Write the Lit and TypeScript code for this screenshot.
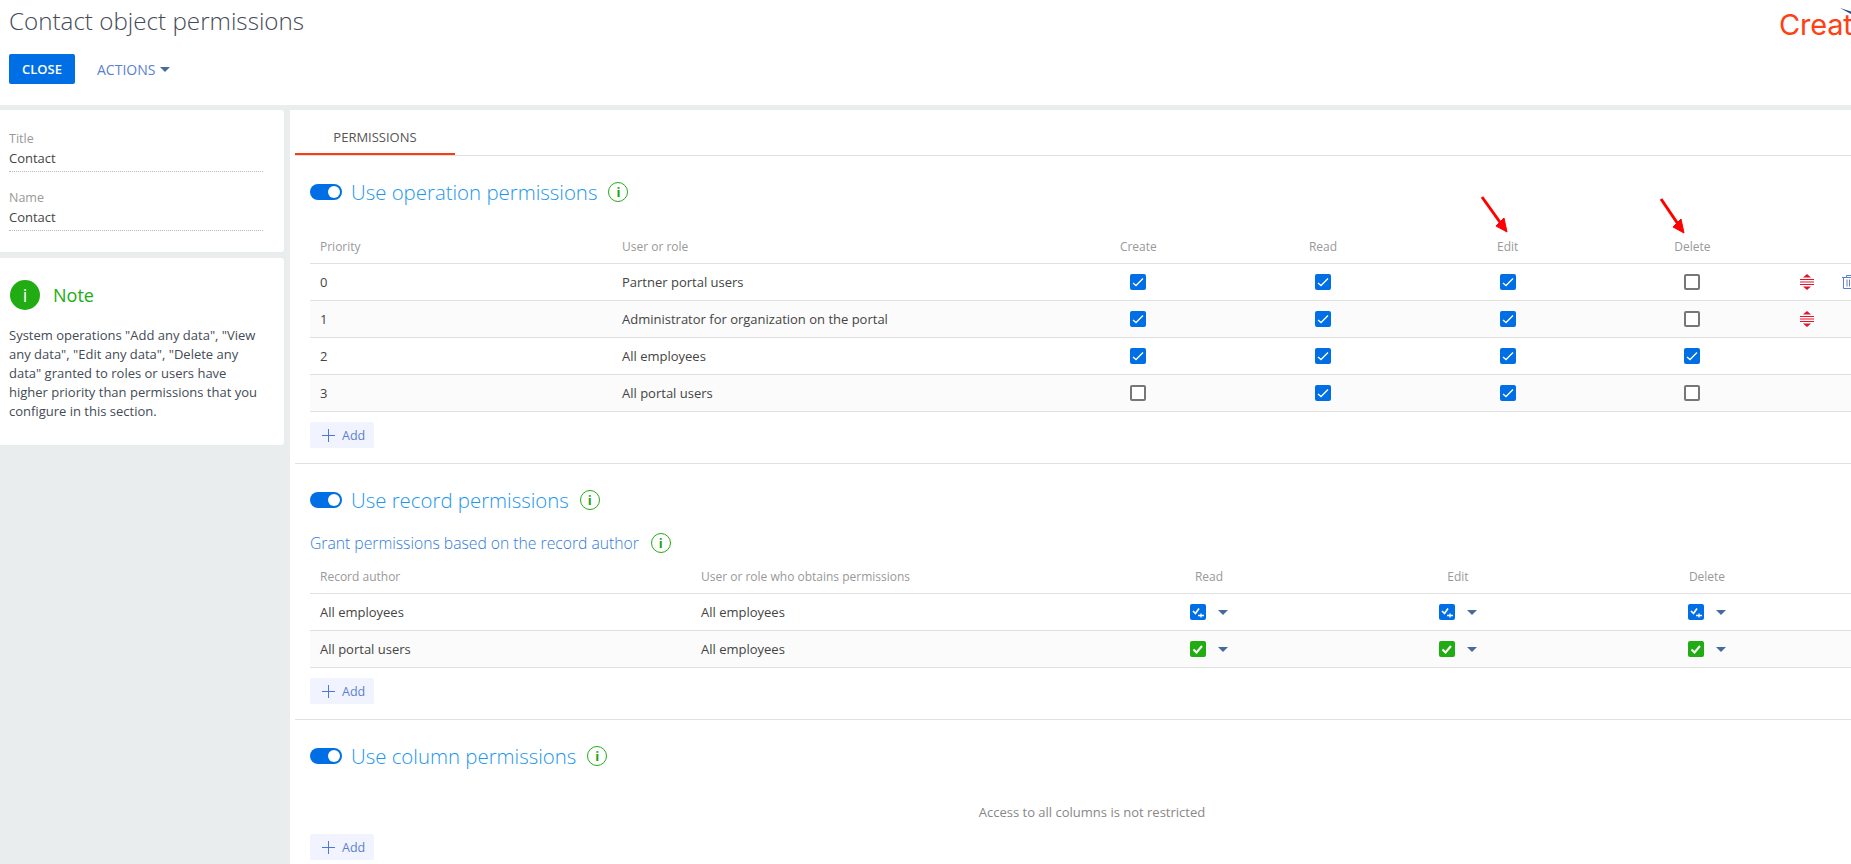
import { LitElement, html, css, svg } from 'lit'
import { customElement } from 'lit/decorators.js'

const opRows = [
  { p: '0', who: 'Partner portal users', c: [1, 1, 1, 0], order: true, trash: true },
  { p: '1', who: 'Administrator for organization on the portal', c: [1, 1, 1, 0], order: true, trash: false },
  { p: '2', who: 'All employees', c: [1, 1, 1, 1], order: false, trash: false },
  { p: '3', who: 'All portal users', c: [0, 1, 1, 0], order: false, trash: false }
]

const recRows = [
  { author: 'All employees', who: 'All employees', kind: 'blue' },
  { author: 'All portal users', who: 'All employees', kind: 'green' }
]

const orderIcon = svg`<svg class="order" width="14" height="16" viewBox="0 0 14 16">
  <path d="M7 0l4 3.500H3zM7 16l-4-3.500h8z" fill="#e3142a"/>
  <path d="M0 5.500h14M0 8h14M0 10.500h14" stroke="#e3142a" stroke-width="1"/>
</svg>`

const trashIcon = svg`<svg class="trash" width="14" height="14" viewBox="0 0 14 14" fill="none" stroke="#5b7fd0">
  <path d="M0 2.500h14M4.500 2.500V.500h5v2M1.500 2.500V13.500h11V2.500M5 4.500v7M7.500 4.500v7M10 4.500v7"/>
</svg>`

@customElement('app-root')
export class AppRoot extends LitElement {
  static styles = css`
    :host {
      display: block;
      position: relative;
      width: 1851px;
      height: 864px;
      overflow: hidden;
      background: #e9eded;
      font-family: 'Open Sans', sans-serif;
      font-size: 13px;
      color: #444;
    }
    .top {
      height: 105px;
      background: #fff;
      display: flex;
      justify-content: space-between;
      padding-left: 9px;
    }
    h1 {
      margin: 0;
      padding-top: 4px;
      font-size: 24.200px;
      line-height: 33px;
      font-weight: 300;
      color: #444b55;
    }
    .btns {
      display: flex;
      align-items: center;
      margin-top: 17px;
    }
    .close {
      width: 66px;
      height: 30px;
      display: flex;
      align-items: center;
      justify-content: center;
      background: #006fe6;
      border-radius: 2px;
      color: #fff;
      font-size: 13px;
      font-weight: 600;
    }
    .actions {
      display: flex;
      align-items: center;
      gap: 5px;
      margin-left: 22px;
      color: #5b7fd0;
      font-size: 14px;
    }
    .caret {
      width: 0;
      height: 0;
      border-left: 5px solid transparent;
      border-right: 5px solid transparent;
      border-top: 5px solid #476a9f;
    }
    .logo {
      position: relative;
      width: 72px;
      height: 60px;
      color: #ff4013;
      font-family: Inter, sans-serif;
      font-size: 29px;
      line-height: 30px;
      letter-spacing: -0.2px;
      padding-top: 10px;
      box-sizing: border-box;
      white-space: nowrap;
    }
    .swoosh {
      position: absolute;
      left: 61px;
      top: 8px;
    }
    .main {
      display: flex;
      gap: 6px;
      margin-top: 5px;
    }
    .side {
      width: 284px;
      flex: none;
      display: flex;
      flex-direction: column;
      gap: 6px;
    }
    .card {
      background: #fff;
      border-radius: 0 3px 3px 0;
    }
    .fields {
      height: 142px;
      padding: 20px 21px 0 9px;
      box-sizing: border-box;
    }
    .field {
      height: 59px;
    }
    .field label {
      display: block;
      color: #999;
      font-size: 12.500px;
      line-height: 18px;
    }
    .field div {
      line-height: 20px;
      height: 23px;
      border-bottom: 1px dotted #bbb;
      color: #444;
    }
    .note {
      height: 187px;
      padding: 22px 16px 0 9px;
      box-sizing: border-box;
      line-height: 19px;
      color: #444b55;
    }
    .note-head {
      display: flex;
      align-items: center;
      gap: 13px;
      margin-bottom: 16px;
      padding-left: 1px;
      font-size: 18px;
      color: #22ac14;
    }
    .note-dot {
      width: 30px;
      height: 30px;
      border-radius: 50%;
      background: #22ac14;
      color: #fff;
      display: flex;
      align-items: center;
      justify-content: center;
      font-size: 18px;
    }
    .content {
      flex: 1;
      min-width: 0;
      height: 754px;
      background: #fff;
      padding-left: 5px;
    }
    .tabs {
      height: 46px;
      border-bottom: 1px solid #e0e0e0;
      box-sizing: border-box;
    }
    .tab {
      width: 160px;
      height: 45px;
      box-sizing: border-box;
      border-bottom: 2px solid #ff3a10;
      display: flex;
      align-items: center;
      justify-content: center;
      padding-top: 10px;
      color: #555;
      font-size: 13px;
    }
    section {
      box-sizing: border-box;
      padding: 16px 0 0 15px;
      border-bottom: 1px solid #e0e0e0;
    }
    .sec-op {
      height: 308px;
    }
    .sec-rec {
      height: 256px;
    }
    .sec-col {
      border-bottom: 0;
    }
    .sec-head {
      display: flex;
      align-items: center;
      height: 40px;
      gap: 9px;
      color: #2196f0;
      font-size: 20.400px;
      font-weight: 300;
    }
    .gap-op {
      height: 26px;
    }
    .gap-grant {
      height: 11px;
    }
    .gap-rec {
      height: 13px;
    }
    .gap-add {
      height: 10px;
    }
    .toggle {
      width: 32px;
      height: 16px;
      border-radius: 8px;
      background: #006fe6;
      position: relative;
      flex: none;
    }
    .toggle::after {
      content: '';
      position: absolute;
      right: 2px;
      top: 2px;
      width: 12px;
      height: 12px;
      border-radius: 50%;
      background: #fff;
    }
    .info {
      width: 20px;
      height: 20px;
      box-sizing: border-box;
      margin-left: 2px;
      flex: none;
      border: 1.500px solid #22ac14;
      border-radius: 50%;
      color: #1aa50e;
      display: flex;
      align-items: center;
      justify-content: center;
      font-size: 13px;
      font-weight: 700;
    }
    .grant {
      display: flex;
      align-items: center;
      gap: 10px;
      height: 24px;
      color: #2f7bdc;
      font-size: 15.700px;
      font-weight: 300;
    }
    .row {
      display: grid;
      align-items: center;
      height: 37px;
      box-sizing: border-box;
      border-bottom: 1px solid #e0e0e0;
    }
    .row > :first-child {
      padding-left: 10px;
    }
    .row:nth-child(odd):not(.hd) {
      background: #fbfbfb;
    }
    .ops {
      grid-template-columns: 312px 424px repeat(4, 184.700px) 1fr;
    }
    .recs {
      grid-template-columns: 381px 393.500px repeat(3, 249px) 1fr;
    }
    .rec-who {
      padding-left: 10px;
    }
    .hd {
      color: #999;
      font-size: 12px;
      height: 26px;
      line-height: 18px;
      padding-bottom: 7px;
    }
    .center {
      display: flex;
      justify-content: center;
      align-items: center;
    }
    .check {
      width: 16px;
      height: 16px;
      border-radius: 2px;
      background: #006fe6;
      display: block;
      flex: none;
    }
    .check.off {
      box-sizing: border-box;
      background: #fff;
      border: 2px solid #777;
    }
    .check.green {
      background: #22ac14;
    }
    .perm {
      gap: 12px;
    }
    .tools {
      display: flex;
      align-items: center;
      padding-left: 15px;
      gap: 28px;
      width: 100px;
    }
    .order,
    .trash {
      flex: none;
    }
    .add {
      display: flex;
      align-items: center;
      gap: 7px;
      width: 64px;
      height: 26px;
      box-sizing: border-box;
      padding-left: 12px;
      border-radius: 2px;
      background: #f1f4fe;
      color: #5b7fd0;
      font-size: 12.500px;
    }
    .empty {
      text-align: center;
      color: #888;
      line-height: 16px;
      margin: 28px 0 14px;
      padding-left: 23px;
    }
    .arrows {
      position: absolute;
      left: 0;
      top: 0;
      pointer-events: none;
    }
  `

  private check (on: number) {
    if (!on) return html`<span class="check off"></span>`
    return html`<svg class="check" viewBox="0 0 16 16" fill="none" stroke="#fff" stroke-width="1.300">
      <path d="M3 9l3 2.500 7-7"/></svg>`
  }

  private permCheck (kind: string) {
    if (kind === 'green') {
      return html`<svg class="check green" viewBox="0 0 16 16" fill="none" stroke="#fff" stroke-width="2">
        <path d="M3.500 8.500l3 3 5.500-6.500"/></svg>`
    }
    return html`<svg class="check" viewBox="0 0 16 16" fill="none" stroke="#fff" stroke-width="1.700">
      <path d="M3 7l2.500 2.500 3.500-5"/>
      <path d="M8 11.500h6M11 9.500v4" stroke-width="1.300"/></svg>`
  }

  private add () {
    return html`<div class="add">
      <svg width="13" height="13" viewBox="0 0 13 13" stroke="#4a78dc"><path d="M6.500 0v13M0 6.500h13"/></svg>
      Add
    </div>`
  }

  private head (title: string) {
    return html`<div class="sec-head">
      <span class="toggle"></span><span>${title}</span><span class="info">i</span>
    </div>`
  }

  render () {
    return html`
      <div class="top">
        <div>
          <h1>Contact object permissions</h1>
          <div class="btns">
            <div class="close">CLOSE</div>
            <div class="actions">ACTIONS <span class="caret"></span></div>
          </div>
        </div>
        <div class="logo">Creat
          <svg class="swoosh" width="11" height="6" viewBox="0 0 11 6"><path d="M0 0l11 3.500V6z" fill="#1f4e8c"/></svg>
        </div>
      </div>
      <div class="main">
        <div class="side">
          <div class="card fields">
            <div class="field"><label>Title</label><div>Contact</div></div>
            <div class="field"><label>Name</label><div>Contact</div></div>
          </div>
          <div class="card note">
            <div class="note-head"><span class="note-dot">i</span>Note</div>
            System operations "Add any data", "View any data", "Edit any data", "Delete any data" granted to roles or users have higher priority than permissions that you configure in this section.
          </div>
        </div>
        <div class="content">
          <div class="tabs"><div class="tab">PERMISSIONS</div></div>

          <section class="sec-op">
            ${this.head('Use operation permissions')}
            <div class="gap-op"></div>
            <div class="row ops hd">
              <div>Priority</div><div>User or role</div>
              <div class="center">Create</div><div class="center">Read</div>
              <div class="center">Edit</div><div class="center">Delete</div>
            </div>
            ${opRows.map(r => html`<div class="row ops">
              <div>${r.p}</div><div>${r.who}</div>
              ${r.c.map(v => html`<div class="center">${this.check(v)}</div>`)}
              <div class="tools">${r.order ? orderIcon : ''}${r.trash ? trashIcon : ''}</div>
            </div>`)}
            <div class="gap-add"></div>
            ${this.add()}
          </section>

          <section class="sec-rec">
            ${this.head('Use record permissions')}
            <div class="gap-grant"></div>
            <div class="grant">Grant permissions based on the record author <span class="info">i</span></div>
            <div class="gap-rec"></div>
            <div class="row recs hd">
              <div>Record author</div><div class="rec-who">User or role who obtains permissions</div>
              <div class="center">Read</div><div class="center">Edit</div><div class="center">Delete</div>
            </div>
            ${recRows.map(r => html`<div class="row recs">
              <div>${r.author}</div><div class="rec-who">${r.who}</div>
              ${[0, 1, 2].map(() => html`<div class="center perm">${this.permCheck(r.kind)}<span class="caret"></span></div>`)}
            </div>`)}
            <div class="gap-add"></div>
            ${this.add()}
          </section>

          <section class="sec-col">
            ${this.head('Use column permissions')}
            <div class="empty">Access to all columns is not restricted</div>
            ${this.add()}
          </section>
        </div>
      </div>
      <svg class="arrows" width="1851" height="864">
        <g fill="#f00" stroke="#f00">
          <path d="M1482 197l20 28" stroke-width="3" fill="none"/>
          <path d="M1507 232l-11-6 8-8z"/>
          <path d="M1661 199l19 28" stroke-width="3" fill="none"/>
          <path d="M1684 233l-11-6 8-8z"/>
        </g>
      </svg>
    `
  }
}
